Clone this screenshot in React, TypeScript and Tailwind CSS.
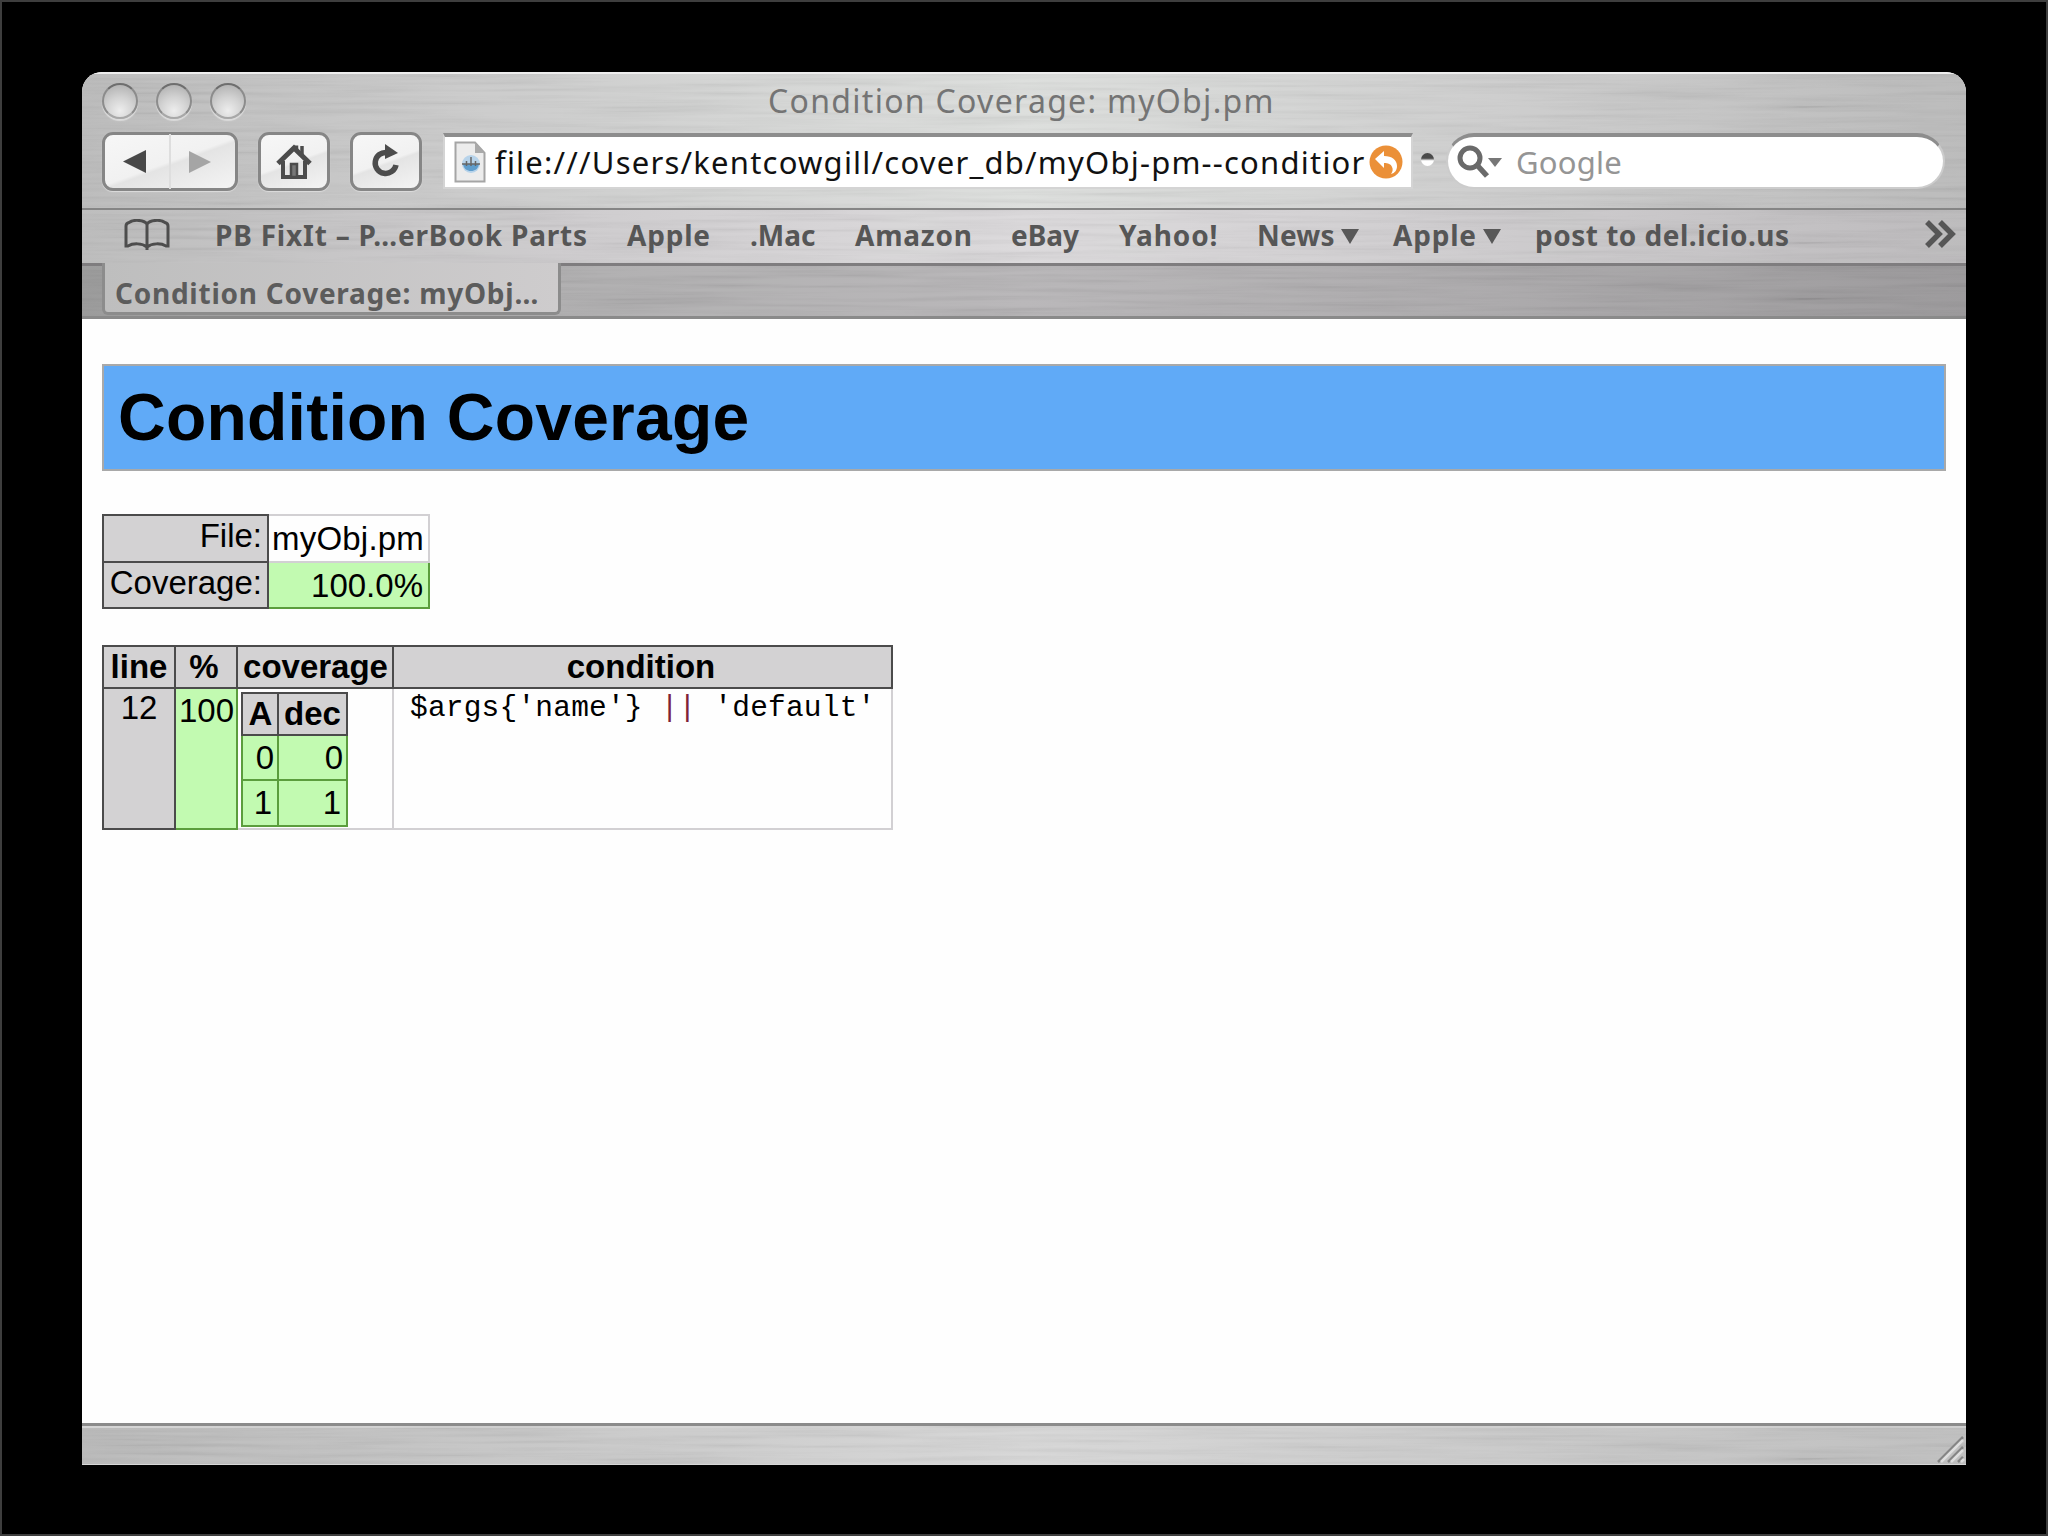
import type { ReactNode } from "react";
import { clsx } from "clsx";

interface Bookmark {
  label: string;
  className: string;
  menu?: boolean;
}

const BOOKMARKS: Bookmark[] = [
  { label: "PB FixIt – P…erBook Parts", className: "w-[412px] tracking-[0.8px]" },
  { label: "Apple", className: "w-[123px] tracking-[0.8px]" },
  { label: ".Mac", className: "w-[105px]" },
  { label: "Amazon", className: "w-[156px] tracking-[0.8px]" },
  { label: "eBay", className: "w-[108px]" },
  { label: "Yahoo!", className: "w-[138px] tracking-[0.9px]" },
  { label: "News", className: "w-[136px] tracking-[0.2px]", menu: true },
  { label: "Apple", className: "w-[142px] tracking-[0.8px]", menu: true },
  { label: "post to del.icio.us", className: "w-[260px] tracking-[0.5px]" },
];

/** Fine horizontal streaks laid over the window chrome. */
function Brushed({ id }: { id: string }) {
  return (
    <svg className="pointer-events-none absolute inset-0 size-full opacity-[0.07]">
      <filter id={id} x="0" y="0" width="100%" height="100%">
        <feTurbulence type="fractalNoise" baseFrequency="0.006 0.22" numOctaves="3" seed="4" />
        <feColorMatrix values="1.8 0 0 0 -0.2  1.8 0 0 0 -0.2  1.8 0 0 0 -0.2  0 0 0 0 1" />
      </filter>
      <rect width="100%" height="100%" filter={`url(#${id})`} />
    </svg>
  );
}

function WindowButton() {
  return (
    <span className="size-9 rounded-full border-2 border-[#8c8c8c] border-t-[#6e6e6e] border-b-[#a8a8a8] bg-[radial-gradient(circle_at_50%_80%,#ededed_0%,#d2d2d2_45%,#a9a9a9_100%)] shadow-[0_2px_1px_#dcdcdc]" />
  );
}

function ToolButton({ className, children }: { className: string; children: ReactNode }) {
  return (
    <div
      className={clsx(
        "flex h-[59px] items-center justify-center rounded-[11px] border-[3px] border-[#868686] bg-[linear-gradient(160deg,#f7f7f7_0%,#f1f1f1_50%,#e4e4e4_54%,#f4f4f4_100%)] shadow-[0_1px_1px_#ddd]",
        className,
      )}
    >
      {children}
    </div>
  );
}

function HomeIcon() {
  return (
    <svg width="36" height="36" viewBox="0 0 36 36" fill="none" stroke="#4c4c4c">
      <path d="M2 19.500 18 4l16 15.500" strokeWidth="5" />
      <path d="M26 11V2M20.500 5V1.500" strokeWidth="3.500" />
      <path d="M7 17v16h22V17" strokeWidth="4" />
      <path d="M15 33V20h6v13z" strokeWidth="2.500" fill="#777" />
    </svg>
  );
}

function ReloadIcon() {
  return (
    <svg width="32" height="34" viewBox="0 0 32 34" fill="none" className="-mt-1">
      <path d="M17 9.500A10.500 10.500 0 1 0 26 22" stroke="#4c4c4c" strokeWidth="5.500" />
      <path d="M15 1v15l13-6z" fill="#4c4c4c" />
    </svg>
  );
}

function PageIcon() {
  return (
    <svg width="32" height="42" viewBox="0 0 32 42" className="shrink-0">
      <path d="M1.500 1.500H21L30.500 12v28.500h-29z" fill="#ececec" stroke="#a5a5a5" strokeWidth="2" />
      <path d="M21 1.500V12h9.500z" fill="#a9a9a9" />
      <circle cx="17" cy="23" r="9" fill="#b7d3ea" />
      <path d="M9 23h16c-1 5-4 7-8 7s-7-2-8-7z" fill="#5f9dcc" />
      <path d="M17 16v9M12.500 20v5M21.500 20v5M8 23h18" stroke="#666" strokeWidth="1.500" />
    </svg>
  );
}

function SnapBackIcon() {
  return (
    <svg width="34" height="34" viewBox="0 0 34 34" className="shrink-0">
      <circle cx="17" cy="17" r="16.500" fill="#eb9038" />
      <path d="M6 14 15 6v5c8 0 13 4 13 10 0 4-2 7-6 8 2-3 2-5 1-7-1-3-4-4-8-4v5z" fill="#fff" />
    </svg>
  );
}

function SearchIcon() {
  return (
    <svg width="46" height="34" viewBox="0 0 46 34" className="shrink-0" fill="none">
      <circle cx="13" cy="13" r="10" stroke="#6a6a6a" strokeWidth="5" />
      <path d="m20 20 10 11" stroke="#6a6a6a" strokeWidth="5.500" />
      <path d="M31 13h14l-7 9z" fill="#777" />
    </svg>
  );
}

function BookIcon() {
  return (
    <svg width="46" height="32" viewBox="0 0 46 32" fill="none" stroke="#4d4d4d" strokeWidth="3">
      <path d="M23 5C20 1 10 0 5 3.500 3 4 2 5 2 7v20h2c5-3 14-3 19 1 5-4 14-4 19-1h2V7c0-2-1-3-3-3.500C36 0 26 1 23 5zM23 5v26" />
    </svg>
  );
}

const dark = "border-2 border-[#4b4b4b] bg-[#d3d2d3]";
const green = "border-2 border-[#5b9d3d] bg-[#c2fab1]";
const plain = "border-2 border-[#d2d0d3]";

export default function App() {
  return (
    <div className="h-[1536px] w-[2048px] overflow-hidden border-2 border-[#3e3e3e] bg-black pt-[70px] pl-20 font-['Noto_Sans',sans-serif]">
      <div className="flex h-[1393px] w-[1884px] flex-col overflow-hidden rounded-t-[20px] bg-white">
        {/* title bar and toolbar */}
        <div className="relative isolate h-[136px] shrink-0 border-t-2 border-[#eeeeee] bg-[linear-gradient(90deg,#b9b9b9_0%,#c8c8c8_20%,#dbdddb_50%,#cbcbcb_75%,#b7b7b7_100%)]">
          <div className="absolute inset-0 -z-10">
            <Brushed id="brush-top" />
          </div>
          <div className="flex h-[54px] items-center pb-px">
            <div className="flex w-[686px] gap-[18px] pl-5">
              <WindowButton />
              <WindowButton />
              <WindowButton />
            </div>
            <h1 className="text-[32px] leading-[54px] tracking-[1.3px] whitespace-nowrap text-[#747474]">
              Condition Coverage: myObj.pm
            </h1>
          </div>
          <div className="flex items-start pt-1 pl-5">
            <ToolButton className="w-[136px]">
              <span className="flex flex-1 justify-center border-r-2 border-[#dedede] py-4 pr-1.5">
                <svg width="23" height="23" viewBox="0 0 23 23">
                  <path d="M0 11.500 23 0v23z" fill="#484848" />
                </svg>
              </span>
              <span className="flex flex-1 justify-center pr-1.5">
                <svg width="22" height="22" viewBox="0 0 22 22">
                  <path d="M22 11 0 0v22z" fill="#a5a5a5" />
                </svg>
              </span>
            </ToolButton>
            <ToolButton className="ml-5 w-[72px]">
              <HomeIcon />
            </ToolButton>
            <ToolButton className="ml-5 w-[72px]">
              <ReloadIcon />
            </ToolButton>
            <div className="mt-px ml-[21px] flex h-[56px] w-[970px] items-center border-2 border-t-4 border-[#d4d4d4] border-t-[#8d8d8d] bg-white pl-[9px]">
              <PageIcon />
              <span className="ml-[9px] w-[874px] overflow-hidden text-[31px] leading-[50px] tracking-[1.22px] whitespace-nowrap text-[#111]">
                file:///Users/kentcowgill/cover_db/myObj-pm--conditior
              </span>
              <SnapBackIcon />
            </div>
            <span className="mt-[21px] ml-[8px] size-[13px] rounded-full bg-[linear-gradient(#4a4a4a_40%,#fff_60%)]" />
            <div className="mt-px ml-[12px] flex h-[56px] w-[499px] items-center rounded-full border-2 border-t-4 border-[#cccccc] border-t-[#8d8d8d] bg-white pl-[9px]">
              <SearchIcon />
              <span className="ml-[13px] text-[31px] leading-[50px] tracking-[0.2px] text-[#959595]">Google</span>
            </div>
          </div>
        </div>

        {/* bookmarks bar */}
        <div className="relative isolate flex h-[55px] shrink-0 items-center border-t-2 border-[#858585] bg-[linear-gradient(90deg,#bababa_0%,#cbc9cb_25%,#dad8da_50%,#cbc9cb_75%,#b9b7b9_100%)] pb-1 pl-[42px]">
          <div className="absolute inset-0 -z-10">
            <Brushed id="brush-bookmarks" />
          </div>
          <BookIcon />
          <div className="ml-[45px] flex text-[28px] leading-9 font-bold text-[#565656]">
            {BOOKMARKS.map((b, i) => (
              <div key={i} className={clsx("flex shrink-0 items-center whitespace-nowrap", b.className)}>
                {b.label}
                {b.menu && (
                  <svg width="18" height="16" viewBox="0 0 18 16" className="mt-1 ml-1.5">
                    <path d="M0 0h18L9 15z" fill="#585858" />
                  </svg>
                )}
              </div>
            ))}
          </div>
          <svg width="33" height="28" viewBox="0 0 33 28" className="mt-[-2px] ml-[129px]" fill="none" stroke="#565656" strokeWidth="5.500">
            <path d="m3 2 12 12L3 26M16 2l12 12-12 12" />
          </svg>
        </div>

        {/* tab strip */}
        <div className="relative isolate flex h-[56px] shrink-0 border-t-[3px] border-b-[3px] border-[#7f7d7f] border-b-[#8a8a8a] bg-[linear-gradient(90deg,#969696_0%,#abaaab_25%,#b5b3b5_50%,#a7a5a7_75%,#969496_100%)]">
          <div className="absolute inset-0 -z-10">
            <Brushed id="brush-tabs" />
          </div>
          <div className="-mt-[3px] ml-[20px] h-[52px] w-[459px] rounded-b-[6px] border-x-[3px] border-b-[3px] border-[#8c8c8c] bg-[linear-gradient(90deg,#bebebe,#cecccd)] pl-[10px] text-[28px] leading-[61px] font-bold tracking-[0.75px] whitespace-nowrap text-[#5c5c5c]">
            Condition Coverage: myObj…
          </div>
        </div>

        {/* report */}
        <main className="flex-1 bg-[#fefefe] px-5 pt-[45px] font-['Liberation_Sans',sans-serif] text-[33px] text-black">
          <h2 className="h-[107px] w-[1844px] border-2 border-[#a9a9a9] bg-[#60aaf7] pl-[14px] text-[66px] leading-[103px] font-bold tracking-[0.25px]">
            Condition Coverage
          </h2>

          <table className="mt-[43px] w-[328px] table-fixed border-collapse leading-9">
            <colgroup>
              <col className="w-[165px]" />
              <col className="w-[161px]" />
            </colgroup>
            <tbody>
              <tr className="h-[47px] align-top">
                <td className={clsx(dark, "pt-[2px] pr-[5px] text-right")}>File:</td>
                <td className={clsx(plain, "pt-[5px] pr-[4px] text-right tracking-[0.2px]")}>myObj.pm</td>
              </tr>
              <tr className="h-[46px] align-top">
                <td className={clsx(dark, "pt-[2px] pr-[5px] text-right")}>Coverage:</td>
                <td className={clsx(green, "pt-[5px] pr-[5px] text-right")}>100.0%</td>
              </tr>
            </tbody>
          </table>

          <table className="mt-[36px] w-[791px] table-fixed border-collapse leading-9">
            <colgroup>
              <col className="w-[72px]" />
              <col className="w-[62px]" />
              <col className="w-[156px]" />
              <col className="w-[499px]" />
            </colgroup>
            <thead>
              <tr className="h-[42px]">
                <th className={dark}>line</th>
                <th className={clsx(dark, "pr-1")}>%</th>
                <th className={clsx(dark, "pl-px")}>coverage</th>
                <th className={clsx(dark, "pr-[3px]")}>condition</th>
              </tr>
            </thead>
            <tbody>
              <tr className="h-[141px] align-top">
                <td className={clsx(dark, "pt-[1px] text-center")}>12</td>
                <td className={clsx(green, "pt-[4px] pl-px text-center")}>100</td>
                <td className={clsx(plain, "pt-[3px] pl-[3px]")}>
                  <table className="w-[107px] table-fixed border-collapse">
                    <colgroup>
                      <col className="w-[36px]" />
                      <col className="w-[69px]" />
                    </colgroup>
                    <thead>
                      <tr className="h-[42px]">
                        <th className={clsx(dark, "pl-px")}>A</th>
                        <th className={dark}>dec</th>
                      </tr>
                    </thead>
                    <tbody className="text-right">
                      <tr className="h-[45px]">
                        <td className={clsx(green, "pr-[3px]")}>0</td>
                        <td className={clsx(green, "pr-[3px]")}>0</td>
                      </tr>
                      <tr className="h-[46px]">
                        <td className={clsx(green, "pr-[5px]")}>1</td>
                        <td className={clsx(green, "pr-[5px]")}>1</td>
                      </tr>
                    </tbody>
                  </table>
                </td>
                <td
                  className={clsx(
                    plain,
                    "pt-[1px] pl-[16px] font-['Liberation_Mono',monospace] text-[29.5px] tracking-[0.2px] whitespace-pre",
                  )}
                >
                  {"$args{'name'} "}
                  <span className="text-[#7d2238]">||</span>
                  {" 'default'"}
                </td>
              </tr>
            </tbody>
          </table>
        </main>

        {/* status bar */}
        <div className="relative isolate flex h-[42px] shrink-0 items-end justify-end border-t-[3px] border-b border-[#8b8b8b] border-b-[#d8d8d8] bg-[linear-gradient(90deg,#b7b7b7_0%,#c5c5c5_25%,#d5d5d5_50%,#c7c7c7_75%,#bcbcbc_100%)] shadow-[inset_0_2px_0_#d2d2d2]">
          <div className="absolute inset-0 -z-10">
            <Brushed id="brush-status" />
          </div>
          <svg width="30" height="30" viewBox="0 0 30 30" fill="none" strokeWidth="2.500">
            <path d="M2 28 27 3M12 28l15-15M22 28l5-5" stroke="#858585" />
            <path d="M5 28 27 6M15 28l12-12M25 28l3-3" stroke="#dedede" />
          </svg>
        </div>
      </div>
    </div>
  );
}
